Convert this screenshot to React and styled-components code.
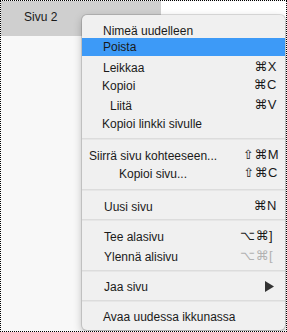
import React from "react";
import styled, { createGlobalStyle } from "styled-components";

const Global = createGlobalStyle`
  html, body { margin: 0; padding: 0; background: #fff; }
  body { font-family: "Liberation Sans", Arial, sans-serif; }
`;

const Frame = styled.div`
  position: relative;
  box-sizing: border-box;
  width: 287px;
  height: 332px;
  border: 1px dotted #000;
  background: #f8f8f8;
  overflow: hidden;
  display: flex;
  flex-direction: column;
`;

const TopBar = styled.div`
  display: flex;
  height: 35px;
  background: #fff;
`;

const Tab = styled.div`
  width: 160px;
  background: #cfcfcf;
  display: flex;
  align-items: center;
  padding-left: 23px;
  padding-bottom: 3px;
  box-sizing: border-box;
  font-size: 12px;
  color: #1a1a1a;
`;

const Menu = styled.div`
  position: absolute;
  top: 14px;
  left: 81px;
  width: 203px;
  height: 315px;
  box-sizing: border-box;
  background: #f0f0f0;
  border-radius: 5px;
  box-shadow: 0 0 0 1px rgba(0, 0, 0, 0.12), 0 3px 9px rgba(0, 0, 0, 0.25);
  padding-top: 8px;
  display: flex;
  flex-direction: column;
`;

const Item = styled.div`
  display: flex;
  align-items: center;
  justify-content: space-between;
  height: ${(p) => p.$h || 18}px;
  margin-top: ${(p) => p.$mt || 0}px;
  padding-left: ${(p) => p.$indent ?? 21}px;
  padding-right: ${(p) => p.$pr ?? 8}px;
  background: ${(p) => (p.$active ? "#3d9af7" : "transparent")};
  font-size: 12px;
  color: #1a1a1a;
  white-space: nowrap;
`;

const Shortcut = styled.span`
  font-family: "Liberation Sans", "DejaVu Sans", sans-serif;
  font-size: 13px;
  color: ${(p) => (p.$dim ? "#b2b2b2" : "#1a1a1a")};
  padding-bottom: 3px;
  letter-spacing: 0.5px;
`;

const Separator = styled.div`
  height: 2px;
  background: #dcdcdc;
  border-bottom: 1px solid #e6e6e6;
  box-sizing: border-box;
  margin-top: ${(p) => p.$mt}px;
  margin-bottom: ${(p) => p.$mb}px;
`;

const Arrow = () => (
  <svg width="9" height="11" viewBox="0 0 9 11" style={{ marginBottom: 2 }}>
    <path d="M0 0 L9 5.5 L0 11 Z" fill="#333" />
  </svg>
);

export default function App() {
  return (
    <>
      <Global />
      <Frame>
        <TopBar>
          <Tab>Sivu 2</Tab>
        </TopBar>
        <Menu>
          <Item $h={15}>Nimeä uudelleen</Item>
          <Item $active>Poista</Item>
          <Item $mt={3}>
            Leikkaa<Shortcut>⌘X</Shortcut>
          </Item>
          <Item $indent={20}>
            Kopioi<Shortcut>⌘C</Shortcut>
          </Item>
          <Item $mt={2} $indent={28}>
            Liitä<Shortcut>⌘V</Shortcut>
          </Item>
          <Item $indent={20}>Kopioi linkki sivulle</Item>
          <Separator $mt={5} $mb={7} />
          <Item $indent={7} $pr={6}>
            Siirrä sivu kohteeseen...<Shortcut>⇧⌘M</Shortcut>
          </Item>
          <Item $indent={37} $pr={7}>
            Kopioi sivu...<Shortcut>⇧⌘C</Shortcut>
          </Item>
          <Separator $mt={6} $mb={7} />
          <Item $indent={22}>
            Uusi sivu<Shortcut>⌘N</Shortcut>
          </Item>
          <Separator $mt={3} $mb={7} />
          <Item $indent={22} $pr={12}>
            Tee alasivu<Shortcut>⌥⌘]</Shortcut>
          </Item>
          <Item $indent={22} $mt={1} $h={19} $pr={12}>
            Ylennä alisivu<Shortcut $dim>⌥⌘[</Shortcut>
          </Item>
          <Separator $mt={4} $mb={6} />
          <Item $indent={22} $pr={11}>
            Jaa sivu<Arrow />
          </Item>
          <Separator $mt={4} $mb={6} />
          <Item>Avaa uudessa ikkunassa</Item>
        </Menu>
      </Frame>
    </>
  );
}
